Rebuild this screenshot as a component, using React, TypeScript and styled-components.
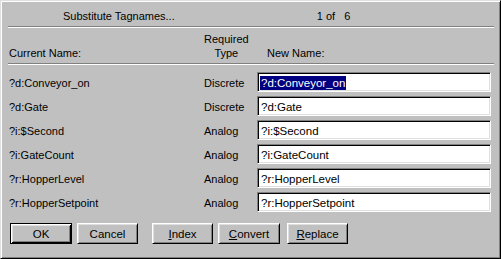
import React from "react";
import styled, { createGlobalStyle } from "styled-components";

const Global = createGlobalStyle`
  html, body { margin: 0; padding: 0; background: #c0c0c0; }
  body { font-family: "Liberation Sans", Arial, sans-serif; font-size: 11px; color: #000; }
  * { box-sizing: border-box; }
`;

const Dialog = styled.div`
  width: 501px;
  height: 259px;
  background: #c0c0c0;
  border-top: 1px solid #dfdfdf;
  border-left: 1px solid #dfdfdf;
  border-right: 1px solid #000;
  border-bottom: 1px solid #000;
  box-shadow: inset 1px 1px 0 #fff, inset -1px -1px 0 #808080;
  padding: 1px;
  display: flex;
  flex-direction: column;
`;

const Header = styled.div`
  height: 24px;
  display: flex;
  align-items: center;
  padding-top: 3px;
`;

const Title = styled.span<{ $left: number }>`
  margin-left: ${(p) => p.$left}px;
  white-space: pre;
`;

const Separator = styled.div`
  margin: 0 5px 0 6px;
  height: 2px;
  border-top: 1px solid #808080;
  border-bottom: 1px solid #fff;
  flex: none;
`;

const Grid = styled.div`
  display: grid;
  grid-template-columns: 195px 53px 234px;
  padding-left: 7px;
`;

const ColumnHeader = styled(Grid)`
  height: 35px;
  align-items: end;
  padding-bottom: 3px;
  & > span { line-height: 14px; }
`;

const NewNameHead = styled.span`
  padding-left: 10px;
`;

const TypeHead = styled.span`
  display: inline-flex;
  flex-direction: column;
  align-items: center;
  justify-self: start;
`;

const Rows = styled(Grid)`
  margin-top: 7px;
  row-gap: 4px;
  grid-auto-rows: 20px;
  align-items: center;
`;

const Label = styled.span`
  padding-top: 1px;
`;

const Field = styled.div`
  height: 20px;
  background: #fff;
  border-top: 1px solid #808080;
  border-left: 1px solid #808080;
  border-right: 1px solid #fff;
  border-bottom: 1px solid #fff;
  box-shadow: inset 1px 1px 0 #000, inset -1px -1px 0 #dfdfdf;
  padding: 2px 0 0 2px;
  display: flex;
  align-items: center;
  line-height: 14px;
  font-size: 11.5px;
  white-space: nowrap;
`;

const Selected = styled.span`
  background: #000080;
  color: #fff;
  padding: 0 1px;
`;

const Plain = styled.span`
  padding: 0 1px;
`;

const ButtonRow = styled.div`
  display: flex;
  margin-top: 11px;
  padding-left: 8px;
`;

const Button = styled.div<{ $ml: number; $default?: boolean; $w: number }>`
  margin-left: ${(p) => p.$ml}px;
  width: ${(p) => p.$w}px;
  height: 21px;
  display: flex;
  align-items: center;
  justify-content: center;
  background: #c0c0c0;
  font-size: 11.5px;
  ${(p) =>
    p.$default
      ? `border: 1px solid #000; box-shadow: inset 1px 1px 0 #fff, inset -1px -1px 0 #000, inset 2px 2px 0 #dfdfdf, inset -2px -2px 0 #808080;`
      : `border-top: 1px solid #fff; border-left: 1px solid #fff; border-right: 1px solid #000; border-bottom: 1px solid #000; box-shadow: inset 1px 1px 0 #dfdfdf, inset -1px -1px 0 #808080;`}
`;

const rows: [string, string][] = [
  ["?d:Conveyor_on", "Discrete"],
  ["?d:Gate", "Discrete"],
  ["?i:$Second", "Analog"],
  ["?i:GateCount", "Analog"],
  ["?r:HopperLevel", "Analog"],
  ["?r:HopperSetpoint", "Analog"],
];

export default function App() {
  return (
    <>
      <Global />
      <Dialog>
        <Header>
          <Title $left={61}>Substitute Tagnames...</Title>
          <Title $left={142}>1 of   6</Title>
        </Header>
        <Separator />
        <ColumnHeader>
          <span>Current Name:</span>
          <TypeHead>
            <span>Required</span>
            <span>Type</span>
          </TypeHead>
          <NewNameHead>New Name:</NewNameHead>
        </ColumnHeader>
        <Separator />
        <Rows>
          {rows.map(([name, type], i) => (
            <React.Fragment key={name}>
              <Label>{name}</Label>
              <Label>{type}</Label>
              <Field>{i === 0 ? <Selected>{name}</Selected> : <Plain>{name}</Plain>}</Field>
            </React.Fragment>
          ))}
        </Rows>
        <ButtonRow>
          <Button $ml={0} $w={62} $default>OK</Button>
          <Button $ml={5} $w={61}>Cancel</Button>
          <Button $ml={14} $w={61}><span><u>I</u>ndex</span></Button>
          <Button $ml={5} $w={62}><span><u>C</u>onvert</span></Button>
          <Button $ml={7} $w={61}><span><u>R</u>eplace</span></Button>
        </ButtonRow>
      </Dialog>
    </>
  );
}
